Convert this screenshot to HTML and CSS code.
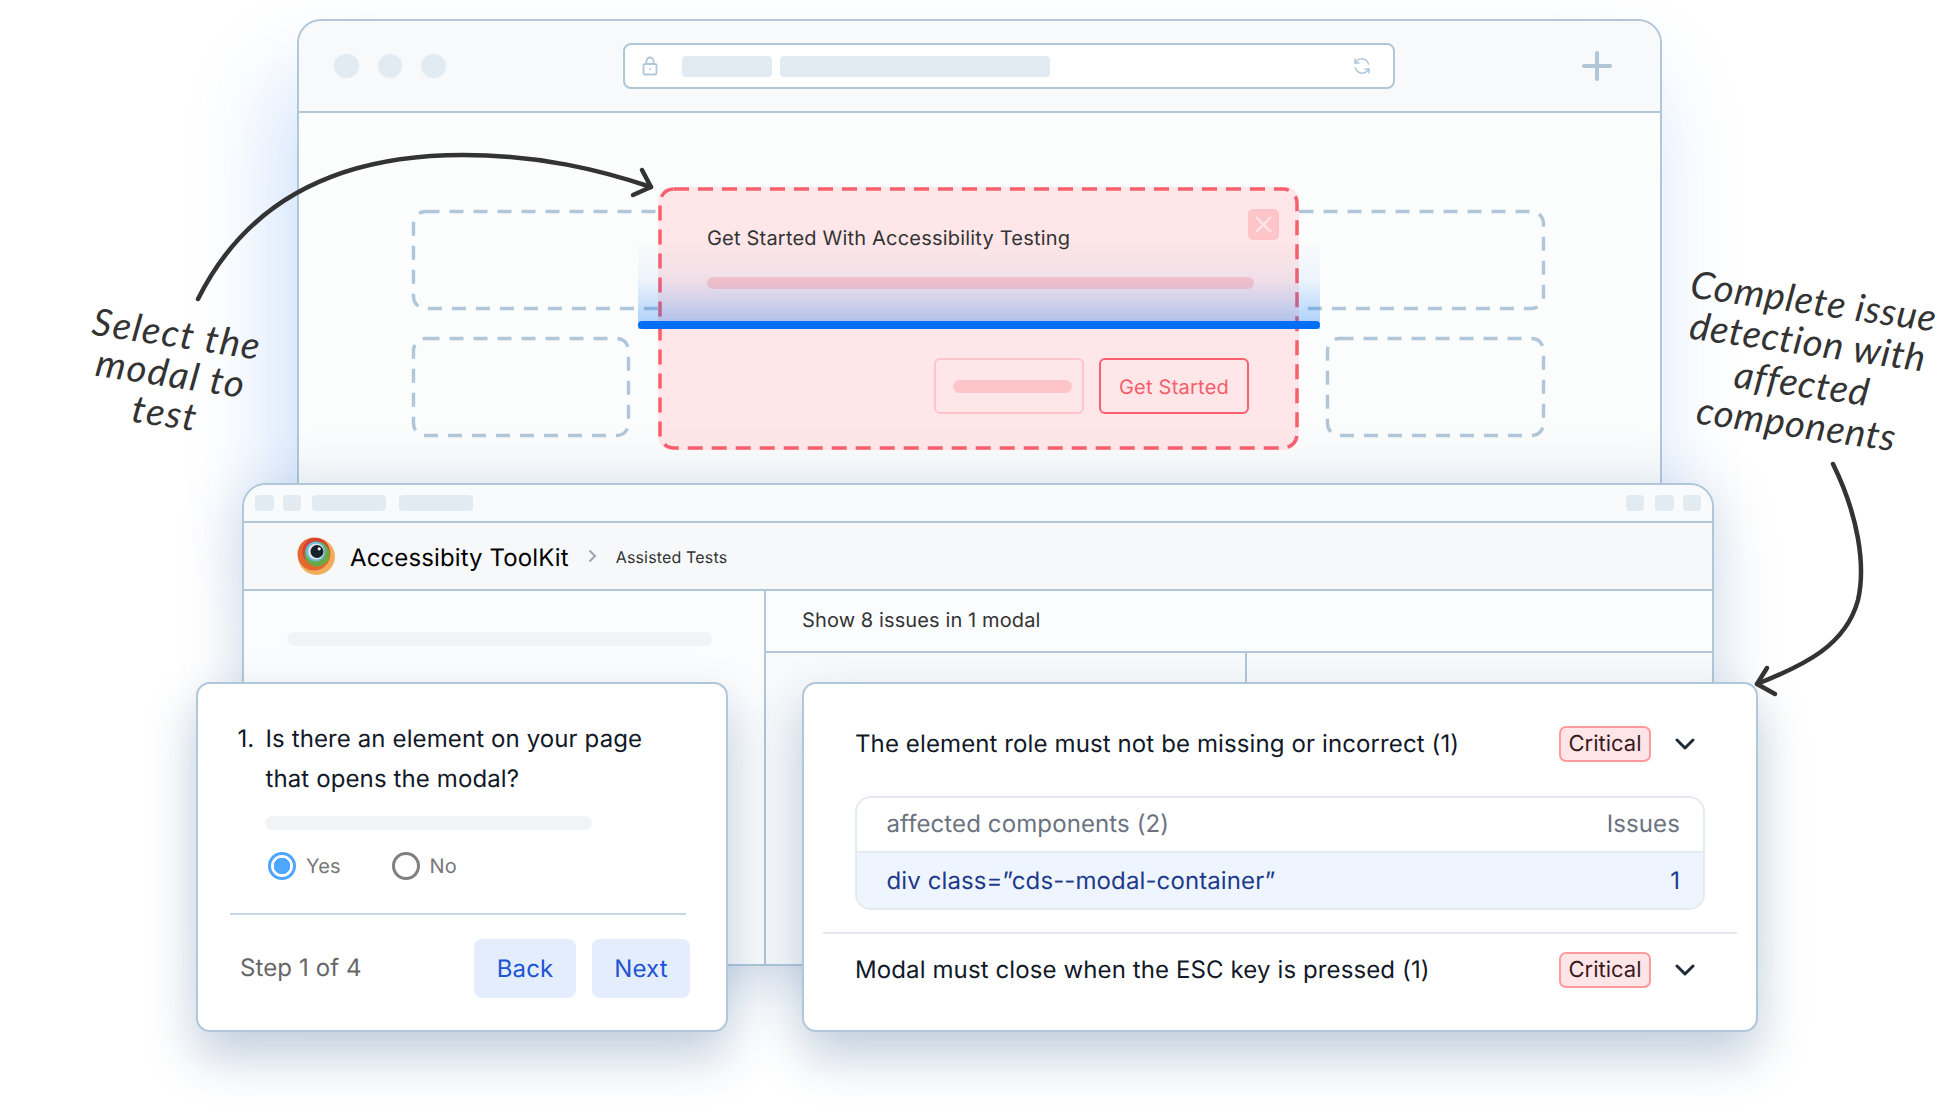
FILE: index.html
```html
<!DOCTYPE html>
<html lang="en">
<head>
<meta charset="utf-8">
<title>Accessibility ToolKit</title>
<link rel="stylesheet" href="styles.css">
</head>
<body>
<main class="stage">
  <section class="browser">
    <header class="browser-head">
      <div class="dots"><i></i><i></i><i></i></div>
      <div class="address">
        <svg class="lock" width="16" height="20" viewBox="0 0 16 20" fill="none" stroke="#b0c6d9" stroke-width="1.8"><rect x="1.500" y="8" width="13" height="10.500" rx="1.500"/><path d="M4.500 8V5a3.500 3.500 0 0 1 7 0v3"/><circle cx="8" cy="13" r="1" fill="#b0c6d9" stroke="none"/></svg>
        <span class="ph ph-a"></span>
        <span class="ph ph-b"></span>
        <svg class="refresh" width="18" height="18" viewBox="0 0 18 18" fill="none" stroke="#b0c6d9" stroke-width="1.500" stroke-linecap="round" stroke-linejoin="round"><path d="M15.500 7A7 7 0 0 0 3.500 4.200L2 6"/><path d="M2 2v4h4"/><path d="M2.500 11a7 7 0 0 0 12 2.800L16 12"/><path d="M16 16v-4h-4"/></svg>
      </div>
      <svg class="plus" width="30" height="30" viewBox="0 0 30 30" stroke="#b0c6d9" stroke-width="4" stroke-linecap="round"><path d="M15 2v26M2 15h26"/></svg>
    </header>
    <div class="browser-body">
      <div class="slots">
        <div class="slot slot-wide-l"><svg class="dash"><rect x="1.500" y="1.500" rx="12"/></svg></div>
        <div class="slot slot-wide-r"><svg class="dash"><rect x="1.500" y="1.500" rx="12"/></svg></div>
      </div>
      <div class="slots">
        <div class="slot slot-narrow-l"><svg class="dash"><rect x="1.500" y="1.500" rx="12"/></svg></div>
        <div class="slot slot-narrow-r"><svg class="dash"><rect x="1.500" y="1.500" rx="12"/></svg></div>
      </div>
      <div class="modal">
        <svg class="dash dash-red"><rect x="2" y="2" rx="14"/></svg>
        <h2 class="modal-title">Get Started With Accessibility Testing</h2>
        <button class="modal-close" type="button" aria-label="Close"><svg width="19" height="19" viewBox="0 0 19 19" stroke="#ffe6e8" stroke-width="2.400" stroke-linecap="round"><path d="M2.500 2.500l14 14M16.500 2.500l-14 14"/></svg></button>
        <div class="modal-line"></div>
        <div class="modal-actions">
          <span class="btn-ghost"><span class="btn-ghost-bar"></span></span>
          <span class="btn-start">Get Started</span>
        </div>
      </div>
      <div class="scan"><div class="scan-line"></div></div>
    </div>
  </section>

  <section class="toolkit">
    <div class="tk-toolbar">
      <i class="sq"></i><i class="sq sq-2"></i><i class="sq-long sq-3"></i><i class="sq-long sq-4"></i>
      <span class="tk-spacer"></span>
      <i class="sq"></i><i class="sq sq-r2"></i><i class="sq sq-r3"></i>
    </div>
    <div class="tk-nav">
      <svg class="logo" width="38" height="38" viewBox="0 0 38 38"><circle cx="19.500" cy="19.500" r="18.500" fill="#f0ae5b"/><circle cx="17" cy="17" r="16.500" fill="#e4672f"/><circle cx="19" cy="14.500" r="13.500" fill="#d8403a"/><circle cx="20" cy="17" r="12.500" fill="#68ab45"/><circle cx="18.500" cy="14.500" r="10" fill="#6fb9dd"/><circle cx="19" cy="14.500" r="8" fill="#dfe6ea"/><circle cx="20" cy="14.500" r="6.500" fill="#15202b"/><circle cx="22.200" cy="11.800" r="1.600" fill="#fff"/></svg>
      <span class="tk-title">Accessibity ToolKit</span>
      <svg class="tk-chev" width="9" height="14" viewBox="0 0 9 14" fill="none" stroke="#9ea5ae" stroke-width="2"><path d="M1.500 1.500L7 7l-5.500 5.500"/></svg>
      <span class="tk-crumb">Assisted Tests</span>
    </div>
    <div class="tk-content">
      <div class="tk-left"><div class="tk-left-bar"></div></div>
      <div class="tk-right">
        <div class="tk-show">Show 8 issues in 1 modal</div>
        <div class="tk-split"><div class="tk-cell"></div><div class="tk-cell-b"></div></div>
      </div>
    </div>
  </section>

  <section class="card card-q">
    <div class="question"><span>1.</span><p>Is there an element on your page that opens the modal?</p></div>
    <div class="q-bar"></div>
    <div class="radios">
      <span class="radio radio-on"></span><span class="radio-label">Yes</span>
      <span class="radio radio-off"></span><span class="radio-label">No</span>
    </div>
    <div class="q-rule"></div>
    <div class="q-foot">
      <span class="step">Step 1 of 4</span>
      <span class="q-btns"><span class="q-btn q-back">Back</span><span class="q-btn q-next">Next</span></span>
    </div>
  </section>

  <section class="card card-i">
    <div class="issue">
      <span class="issue-text">The element role must not be missing or incorrect (1)</span>
      <span class="badge">Critical</span>
      <svg class="chev" width="20" height="12" viewBox="0 0 20 12" fill="none" stroke="#1f2a37" stroke-width="3" stroke-linecap="round" stroke-linejoin="round"><path d="M2 2l8 8 8-8"/></svg>
    </div>
    <div class="table">
      <div class="t-head"><span>affected components (2)</span><span>Issues</span></div>
      <div class="t-row"><span>div class=”cds--modal-container”</span><span>1</span></div>
    </div>
    <div class="i-rule"></div>
    <div class="issue issue-2">
      <span class="issue-text">Modal must close when the ESC key is pressed (1)</span>
      <span class="badge">Critical</span>
      <svg class="chev" width="20" height="12" viewBox="0 0 20 12" fill="none" stroke="#1f2a37" stroke-width="3" stroke-linecap="round" stroke-linejoin="round"><path d="M2 2l8 8 8-8"/></svg>
    </div>
  </section>

  <svg class="arrows" width="1960" height="1120" viewBox="0 0 1960 1120" fill="none" stroke="#333" stroke-width="4.500" stroke-linecap="round" stroke-linejoin="round">
    <path d="M198 299C250 195 345 155 463 155C540 155 600 170 651 187"/>
    <path d="M642 170L651 187L633 195"/>
    <path d="M1833 464C1858 515 1866 565 1858 600C1846 645 1805 665 1757 684"/>
    <path d="M1767 668L1757 684L1775 694"/>
  </svg>

  <p class="note note-l"><span>Select the</span><span>modal to</span><span>test</span></p>
  <p class="note note-r"><span>Complete issue</span><span>detection with</span><span>affected</span><span>components</span></p>
</main>
</body>
</html>
```

FILE: styles.css
```css
* { box-sizing: border-box; }
html, body { margin: 0; padding: 0; background: #fff; }
body { font-family: "Inter", "Liberation Sans", sans-serif; letter-spacing: .007em; text-rendering: geometricPrecision; }
p, h2 { margin: 0; }
i { display: block; }

.stage { position: relative; width: 1960px; height: 1120px; overflow: hidden; background: #fff; }

/* Browser window */
.browser {
  position: absolute; left: 297px; top: 19px; width: 1365px; height: 480px;
  border: 2.500px solid #b0c6d9; border-bottom: 0; border-radius: 24px 24px 0 0;
  background: #fbfcfc;
  box-shadow: -16px 60px 90px rgba(70, 140, 240, .28);
}
.browser-head {
  display: flex; align-items: center; height: 92px; padding-left: 35px;
  background: #f7f9fa; border-bottom: 2.500px solid #b0c6d9; border-radius: 22px 22px 0 0;
}
.dots { display: flex; gap: 19px; }
.dots i { width: 24.500px; height: 24.500px; border-radius: 50%; background: #e3ebf2; }
.address {
  display: flex; align-items: center; width: 772px; height: 46px; margin-left: 177px;
  background: #fff; border: 2.500px solid #b0c6d9; border-radius: 8px; padding-left: 17px;
}
.lock { flex: none; }
.ph { display: block; height: 21px; background: #e3ebf2; border-radius: 4px; }
.ph-a { width: 90px; margin-left: 24px; }
.ph-b { width: 270px; margin-left: 8px; }
.refresh { margin-left: auto; margin-right: 22px; }
.plus { margin-left: 187px; }

.browser-body { position: relative; padding: 97px 115px 0 113px; }
.slots { display: flex; justify-content: space-between; margin-bottom: 27px; }
.slot { height: 100px; }
.slot-wide-l { width: 268px; }
.slot-wide-r { width: 259px; }
.slot-narrow-l { width: 218px; }
.slot-narrow-r { width: 219px; }
.dash { display: block; width: 100%; height: 100%; overflow: visible; }
.dash rect { width: calc(100% - 3px); height: calc(100% - 3px); fill: none; stroke: #b0c6d9; stroke-width: 3.400; stroke-dasharray: 14 10; }

/* Modal under test */
.modal {
  position: absolute; left: 359px; top: 74px; width: 641px; height: 263px;
  background: #ffe6e8; border-radius: 14px; padding: 39px 50px 0 49px;
}
.dash-red { position: absolute; left: 0; top: 0; }
.dash-red rect { width: calc(100% - 4px); height: calc(100% - 4px); stroke: #f8606e; stroke-width: 3.500; stroke-dasharray: 15 9; }
.modal-title { position: relative; font-size: 20px; line-height: 24px; font-weight: 400; color: #333; letter-spacing: .01em; }
.modal-close {
  position: absolute; right: 20px; top: 22px; width: 31px; height: 31px; padding: 0;
  display: flex; align-items: center; justify-content: center;
  border: 0; border-radius: 5px; background: #fec5c8;
}
.modal-line { position: relative; width: 547px; height: 12px; margin-top: 27px; border-radius: 6px; background: #fec5c8; }
.modal-actions { position: relative; display: flex; justify-content: flex-end; gap: 15px; margin-top: 69px; }
.btn-ghost, .btn-start { display: flex; align-items: center; justify-content: center; width: 150px; height: 56px; border-radius: 6px; border: 2.500px solid #ffc5c8; }
.btn-ghost-bar { display: block; width: 119px; height: 13px; margin-left: 7px; border-radius: 7px; background: #fec5c8; }
.btn-start { border-color: #f8606e; color: #f85b6a; font-size: 20px; padding-top: 2px; letter-spacing: .012em; }

.scan {
  position: absolute; left: 339px; top: 127px; width: 682px; height: 89px;
  background: linear-gradient(to top, rgba(0, 112, 243, .34), rgba(0, 112, 243, .06) 55%, rgba(0, 112, 243, 0));
  display: flex; align-items: flex-end;
}
.scan-line { width: 100%; height: 8px; border-radius: 4px; background: #006ef5; }

/* Toolkit window */
.toolkit {
  position: absolute; left: 242px; top: 483px; width: 1472px; height: 483px;
  border: 2.500px solid #b0c6d9; border-radius: 24px 24px 0 0; background: #fbfcfd;
  box-shadow: 0 10px 60px rgba(90, 130, 180, .32);
  display: flex; flex-direction: column;
}
.tk-toolbar {
  display: flex; align-items: center; height: 38px; padding: 0 11px; flex: none;
  background: #f8fafb; border-bottom: 2.500px solid #b0c6d9; border-radius: 22px 22px 0 0;
}
.sq { width: 18.500px; height: 16px; border-radius: 4px; background: #e3ebf2; }
.sq-2 { margin-left: 9px; }
.sq-long { width: 74px; height: 16px; border-radius: 4px; background: #e3ebf2; }
.sq-3 { margin-left: 11px; }
.sq-4 { margin-left: 13px; }
.sq-r2 { margin-left: 11px; }
.sq-r3 { margin-left: 9px; }
.tk-spacer { flex: 1; }
.tk-nav {
  display: flex; align-items: center; height: 68px; padding-left: 53px; flex: none;
  background: #f7f8fa; border-bottom: 2.500px solid #b0c6d9;
}
.logo { flex: none; }
.tk-title { margin-left: 15px; padding-top: 2px; font-size: 24px; color: #000; }
.tk-chev { margin-left: 19px; }
.tk-crumb { margin-left: 19px; padding-top: 2px; font-size: 16px; color: #333; letter-spacing: .01em; }
.tk-content { flex: 1; display: flex; min-height: 0; }
.tk-left { width: 521.500px; flex: none; border-right: 2.500px solid #b0c6d9; padding: 41px 0 0 43px; }
.tk-left-bar { width: 425px; height: 14px; border-radius: 7px; background: #f1f4f7; }
.tk-right { flex: 1; display: flex; flex-direction: column; }
.tk-show { display: flex; align-items: center; height: 62px; padding-left: 36.500px; padding-bottom: 2px; font-size: 20px; color: #333; border-bottom: 2.500px solid #b0c6d9; flex: none; }
.tk-split { flex: 1; display: flex; background: #f8fafb; }
.tk-cell { width: 481px; border-right: 2.500px solid #b0c6d9; }
.tk-cell-b { flex: 1; }

/* Floating cards */
.card {
  position: absolute; top: 682px; height: 350px; background: #fff;
  border: 2.500px solid #b0c6d9; border-radius: 14px;
  box-shadow: 0 24px 50px rgba(60, 100, 145, .32);
}
.card-q { left: 196px; width: 532px; padding-top: 35px; }
.card-i { left: 802px; width: 956px; padding-top: 42px; }

.question { display: flex; margin: 0 60px 0 39.500px; font-size: 24px; line-height: 40px; color: #111827; }
.question span { flex: none; width: 28px; }
.q-bar { width: 327px; height: 14px; margin: 17px 0 0 67px; border-radius: 7px; background: #f1f4f7; }
.radios { display: flex; align-items: center; margin: 22px 0 0 70px; height: 28px; font-size: 20px; color: #777; }
.radio { flex: none; width: 28px; height: 28px; border-radius: 50%; }
.radio-on { border: 3px solid #4da6ff; background: radial-gradient(circle, #4da6ff 0 8px, #fff 8.500px); }
.radio-off { border: 3px solid #808080; margin-left: 51px; }
.radio-label { margin-left: 10px; }
.q-rule { height: 2px; margin: 33px 0 0 32px; width: 456px; background: #c7d7e4; }
.q-foot { display: flex; align-items: center; justify-content: space-between; margin-top: 24px; padding: 0 36px 0 42px; }
.step { font-size: 24px; color: #666; padding-bottom: 2px; }
.q-btns { display: flex; gap: 16px; }
.q-btn { display: flex; align-items: center; justify-content: center; height: 59px; padding-bottom: 1px; border-radius: 8px; background: #e3edfc; color: #2053d5; font-size: 24px; }
.q-back { width: 102px; }
.q-next { width: 98px; }

.issue { display: flex; align-items: center; padding: 0 61px 0 51px; }
.issue-text { flex: 1; font-size: 24px; color: #111827; padding-bottom: 1px; }
.badge {
  display: flex; align-items: center; justify-content: center; width: 92px; height: 36px;
  background: #ffe5e7; border: 2px solid #ff9a9f; border-radius: 7px; font-size: 22px; color: #3a1a1c; letter-spacing: 0;
}
.chev { flex: none; margin-left: 24px; }
.table { margin: 34px 51px 0 51px; border: 2px solid #e5eaf0; border-radius: 16px; overflow: hidden; font-size: 24px; }
.t-head, .t-row { display: flex; align-items: center; justify-content: space-between; padding: 0 23px 0 29.500px; }
.t-head { height: 55px; padding-bottom: 3px; color: #6b7280; border-bottom: 2px solid #e5eaf0; }
.t-row { height: 55px; background: #eef5fe; color: #1e3a8a; }
.i-rule { height: 2px; margin: 22px 19px 0; background: #e5eaf0; }
.issue-2 { margin-top: 18px; }

.arrows { position: absolute; left: 0; top: 0; pointer-events: none; }

/* Handwritten notes */
.note { position: absolute; text-align: center; font-family: "Lato", sans-serif; font-style: italic; color: #333; white-space: nowrap; }
.note span { display: block; }
.note-l { left: 51px; top: 313px; width: 240px; font-size: 38px; letter-spacing: 1.500px; line-height: 40px; transform: rotate(8.600deg); }
.note-r { left: 1645px; top: 280px; width: 320px; font-size: 38px; letter-spacing: .8px; line-height: 41.400px; transform: rotate(8deg); }
```
